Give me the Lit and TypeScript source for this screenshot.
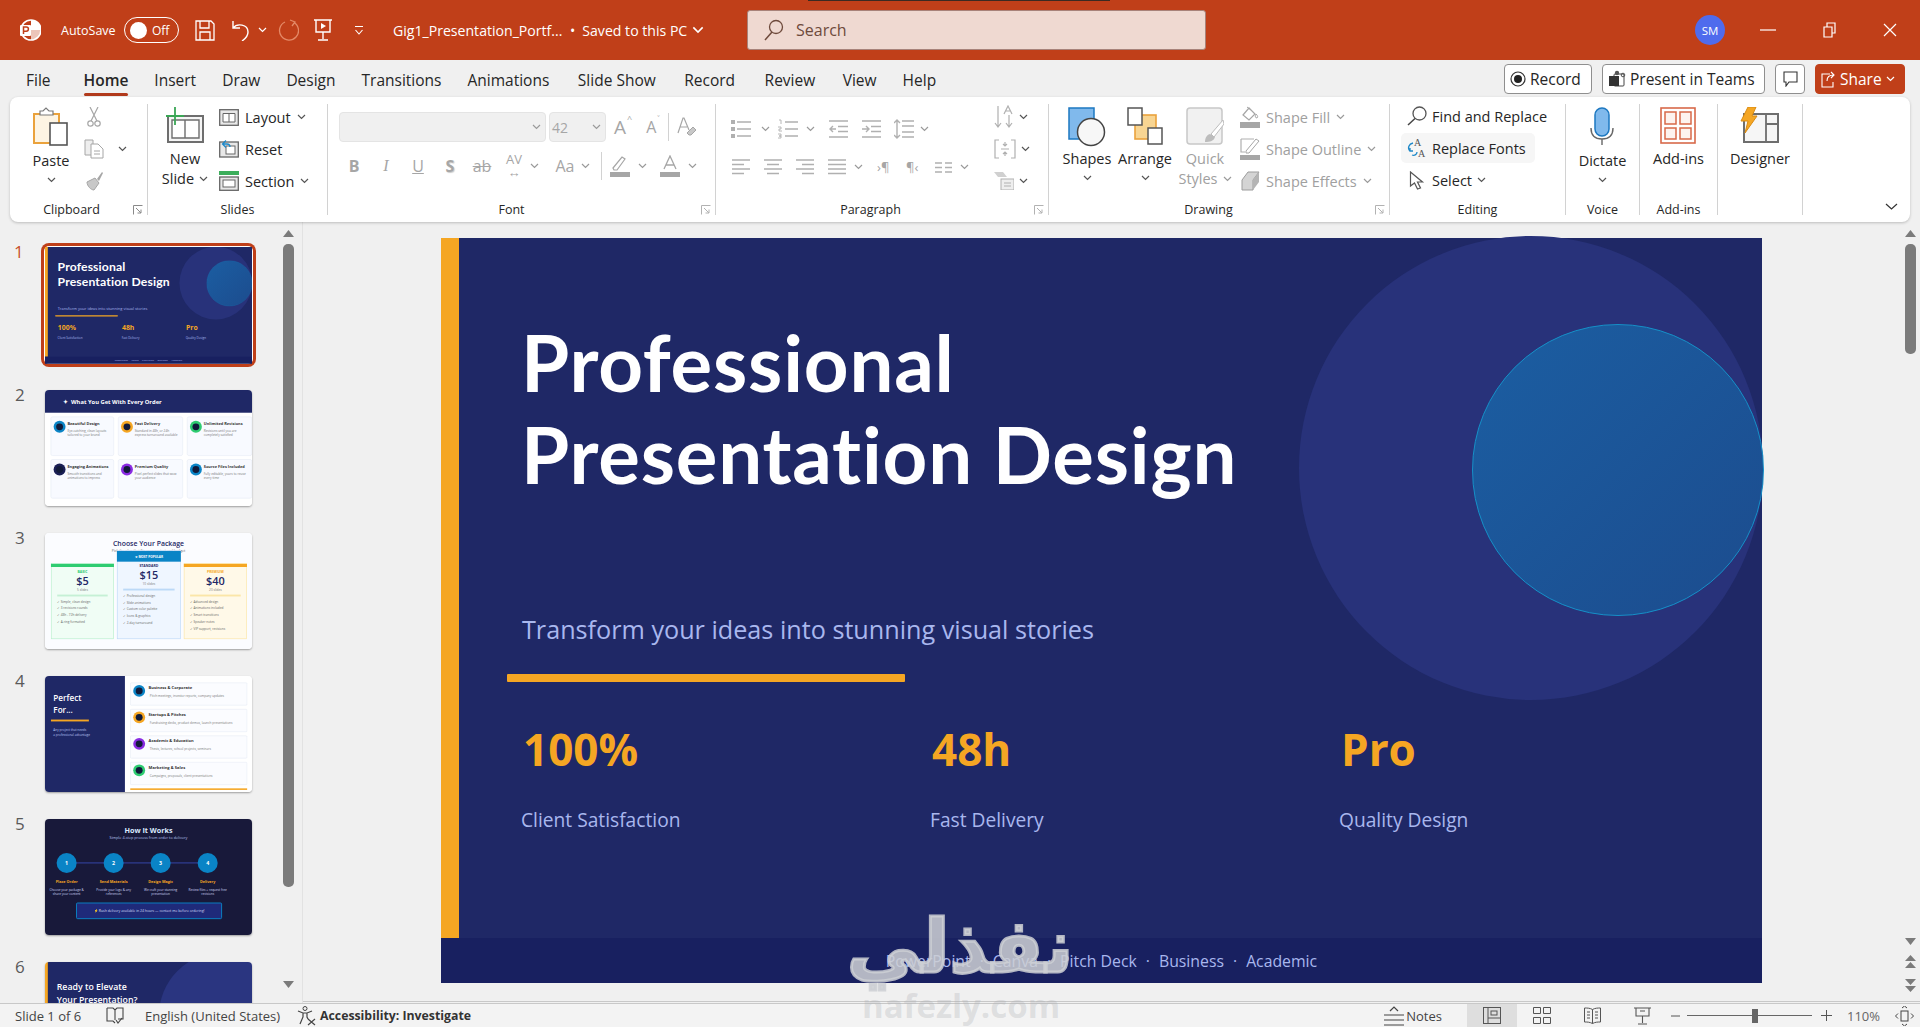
import { LitElement, html, css } from "lit";
import { customElement } from "lit/decorators.js";

const chev = html`<svg class="chev" width="9" height="6" viewBox="0 0 9 6"><path d="M1 1l3.5 3.5L8 1" fill="none" stroke="currentColor" stroke-width="1.2"/></svg>`;

const launcher = html`<svg class="launcher" width="10" height="10" viewBox="0 0 10 10"><path d="M.5 9.5v-9h9M3 3l5 5M8 4.5V8H4.5" fill="none" stroke="#8a8a8a"/></svg>`;

const ic = {
  logo: html`<svg width="22" height="22" viewBox="0 0 22 22"><circle cx="12" cy="11" r="10" fill="none" stroke="#fff" stroke-width="1.6"/><path d="M12 1a10 10 0 0 1 10 10H12z" fill="#fff"/><path d="M12 11h10a10 10 0 0 1-10 10z" fill="#fff" opacity=".7"/><rect x="1" y="6" width="11" height="11" rx="1" fill="#fff"/><path d="M4.5 15V8h2.8a2.1 2.1 0 0 1 0 4.2H4.5" fill="none" stroke="#c03f19" stroke-width="1.5"/></svg>`,
  save: html`<svg width="20" height="21" viewBox="0 0 20 21"><path d="M1 1h15l3 3v16H1zM5 1v7h9V1M5 20v-8h10v8" fill="none" stroke="#fff" stroke-width="1.3"/></svg>`,
  undo: html`<svg width="20" height="21" viewBox="0 0 20 21"><path d="M2 1v7h7M2 8c4-5 15-4 15 4 0 4-3 7-6 9" fill="none" stroke="#fff" stroke-width="1.4"/></svg>`,
  redo: html`<svg width="21" height="24" viewBox="0 0 21 24"><path d="M12 2l5 2-3 4M16 4.5a9.5 9.5 0 1 1-9-.5" fill="none" stroke="#e48a68" stroke-width="1.3"/></svg>`,
  present: html`<svg width="20" height="22" viewBox="0 0 20 22"><path d="M1 1h18M3 1v12h14V1M10 13v7M5 21h10" fill="none" stroke="#fff" stroke-width="1.4"/><path d="M8 4l5 3-5 3z" fill="#fff"/></svg>`,
  custom: html`<svg width="10" height="11" viewBox="0 0 10 11"><path d="M1 1.5h8M1.5 5L5 9l3.5-4" fill="none" stroke="#fff" stroke-width="1.1"/></svg>`,
  search: html`<svg width="22" height="22" viewBox="0 0 22 22"><circle cx="13" cy="8" r="6.5" fill="none" stroke="#6e4a3c" stroke-width="1.3"/><path d="M9 13l-7 8" stroke="#6e4a3c" stroke-width="1.5"/></svg>`,
  record: html`<svg width="16" height="16" viewBox="0 0 16 16"><circle cx="8" cy="8" r="7" fill="none" stroke="#333" stroke-width="1.2"/><circle cx="8" cy="8" r="4" fill="#222"/></svg>`,
  teams: html`<svg width="18" height="18" viewBox="0 0 18 18"><rect x="6" y="4" width="10" height="12" rx="1" fill="none" stroke="#444"/><rect x="1" y="6" width="10" height="10" fill="#333"/><circle cx="9" cy="3" r="2.2" fill="#555"/><circle cx="15" cy="5" r="1.8" fill="none" stroke="#555"/></svg>`,
  comment: html`<svg width="15" height="16" viewBox="0 0 15 16"><path d="M1 1h13v10H6l-3 4v-4H1z" fill="none" stroke="#333" stroke-width="1.1"/></svg>`,
  share: html`<svg width="15" height="17" viewBox="0 0 15 17"><path d="M9 3H1v13h11v-5M6 10c0-4 2-6 7-6M10 1l3 3-3 3" fill="none" stroke="#fff" stroke-width="1.1"/></svg>`,
  paste: html`<svg width="36" height="40" viewBox="0 0 36 40"><rect x="1" y="7" width="25" height="29" fill="#fdf4e3" stroke="#eaa23c" stroke-width="2"/><path d="M7 8V4h3l3-3 3 3h4v4z" fill="#fff" stroke="#7a7a7a" stroke-width="1.2"/><rect x="17" y="16" width="17" height="22" fill="#fff" stroke="#555" stroke-width="1.6"/></svg>`,
  cut: html`<svg width="14" height="20" viewBox="0 0 14 20"><path d="M3 0l7 14M11 0L4 14" stroke="#a6a6a6" stroke-width="1.2"/><circle cx="3.5" cy="16.5" r="2.7" fill="none" stroke="#a6a6a6" stroke-width="1.2"/><circle cx="10.5" cy="16.5" r="2.7" fill="none" stroke="#a6a6a6" stroke-width="1.2"/></svg>`,
  copy: html`<svg width="20" height="20" viewBox="0 0 20 20"><path d="M1 1h8v15H1z" fill="#eee" stroke="#a6a6a6"/><path d="M7 5h7l5 5v9H7z" fill="#fff" stroke="#a6a6a6"/><path d="M10 12h6M10 15h6" stroke="#a6a6a6"/></svg>`,
  brush: html`<svg width="20" height="20" viewBox="0 0 20 20"><path d="M13 8l5-7 1 1-4 8z" fill="#a6a6a6"/><path d="M3 11l8-4 4 5-5 7c-3 0-7-4-7-8z" fill="#c8c8c8" stroke="#a6a6a6"/></svg>`,
  newslide: html`<svg width="38" height="36" viewBox="0 0 38 36"><path d="M2 9h35v26H2z" fill="#f5f5f5" stroke="#6e6e6e" stroke-width="2"/><path d="M6 13h27v18H6zM19 13v18" fill="#fff" stroke="#6e6e6e" stroke-width="1.4"/><path d="M9 0v18M0 9h18" stroke="#3aa655" stroke-width="1.8"/></svg>`,
  layout: html`<svg width="20" height="17" viewBox="0 0 20 17"><rect x=".7" y=".7" width="18.6" height="15.6" fill="#e8e8e8" stroke="#666" stroke-width="1.3"/><path d="M4 4.5h12V13H4zM10 4.5V13" fill="#fff" stroke="#666"/></svg>`,
  reset: html`<svg width="20" height="18" viewBox="0 0 20 18"><rect x=".7" y="2" width="18.6" height="15" fill="#e8e8e8" stroke="#666" stroke-width="1.3"/><rect x="7" y="6" width="9" height="8" fill="#fff" stroke="#666"/><path d="M7 .5L3.5 4 7 7.5M4 4h4c2 0 3 1 3 3" fill="none" stroke="#1e88c8" stroke-width="1.3"/></svg>`,
  section: html`<svg width="20" height="20" viewBox="0 0 20 20"><rect x="0" y="0" width="20" height="4" fill="#3cae5b"/><rect x=".7" y="6" width="18.6" height="13.3" fill="#e8e8e8" stroke="#666" stroke-width="1.3"/><rect x="4" y="9" width="12" height="7" fill="#fff" stroke="#666"/></svg>`,
  clear: html`<svg width="20" height="22" viewBox="0 0 20 22"><path d="M1 17L6 2h1l5 12M3 11h7" fill="none" stroke="#a6a6a6" stroke-width="1.2"/><path d="M10 17l6-6 3 3-5 5h-2z" fill="#c8c8c8" stroke="#a6a6a6"/></svg>`,
  hl: html`<svg width="20" height="22" viewBox="0 0 20 22"><path d="M3 13L12 2l3 2-8 11H4z" fill="none" stroke="#a6a6a6" stroke-width="1.2"/><rect x="0" y="17" width="20" height="5" fill="#a6a6a6"/></svg>`,
  colorA: html`<svg width="20" height="22" viewBox="0 0 20 22"><path d="M4 14L10 1l6 13M6 10h8" fill="none" stroke="#a6a6a6" stroke-width="1.3"/><rect x="0" y="17" width="20" height="5" fill="#a6a6a6"/></svg>`,
  bullets: html`<svg width="20" height="18" viewBox="0 0 20 18"><path d="M6 2h14M6 9h14M6 16h14" stroke="#b0b0b0" stroke-width="1.6"/><path d="M0 0h4v4H0zM0 7h4v4H0zM0 14h4v4H0z" fill="#b0b0b0"/></svg>`,
  numbers: html`<svg width="20" height="20" viewBox="0 0 20 20"><path d="M7 3h13M7 10h13M7 17h13" stroke="#b0b0b0" stroke-width="1.6"/><path d="M1 1h2v4M0 8h3v2H1v2h3M0 15h3v2H1M1 17h2v2H0" fill="none" stroke="#b0b0b0" stroke-width=".9"/></svg>`,
  outdent: html`<svg width="19" height="18" viewBox="0 0 19 18"><path d="M0 1h19M9 6.5h10M9 11.5h10M0 17h19M7 9H1M4 6L1 9l3 3" fill="none" stroke="#b0b0b0" stroke-width="1.4"/></svg>`,
  indent: html`<svg width="19" height="18" viewBox="0 0 19 18"><path d="M0 1h19M9 6.5h10M9 11.5h10M0 17h19M0 9h6M4 6l3 3-3 3" fill="none" stroke="#b0b0b0" stroke-width="1.4"/></svg>`,
  lines: html`<svg width="20" height="20" viewBox="0 0 20 20"><path d="M8 2h12M8 7h12M8 13h12M8 18h12M3 1v18M0 4l3-3 3 3M0 16l3 3 3-3" fill="none" stroke="#b0b0b0" stroke-width="1.4"/></svg>`,
  textdir: html`<svg width="20" height="24" viewBox="0 0 20 24"><path d="M4 1v21M1 18l3 4 3-4M15 10v12M12 18l3 4 3-4M10 9l4-8 4 8M11 6h6" fill="none" stroke="#b0b0b0" stroke-width="1.2"/></svg>`,
  aligntext: html`<svg width="22" height="20" viewBox="0 0 22 20"><path d="M5 1H1v18h4M17 1h4v18h-4M7 10h8M11 3v4M9 5l2 2 2-2M11 17v-4M9 15l2-2 2 2" fill="none" stroke="#b0b0b0" stroke-width="1.2"/></svg>`,
  smart: html`<svg width="20" height="18" viewBox="0 0 20 18"><path d="M0 0h9l4 5H4z" fill="#d0d0d0"/><rect x="7" y="7" width="13" height="11" fill="#eee" stroke="#b0b0b0"/><path d="M10 11h7M10 14h7" stroke="#b0b0b0"/></svg>`,
  shapes: html`<svg width="38" height="40" viewBox="0 0 38 40"><rect x="1" y="1" width="25" height="31" fill="#80b9ec" stroke="#1d78c1" stroke-width="1.5"/><circle cx="23" cy="25" r="13.5" fill="#f7f7f7" stroke="#444" stroke-width="1.5"/></svg>`,
  arrange: html`<svg width="36" height="38" viewBox="0 0 36 38"><rect x="8" y="8" width="21" height="24" fill="#f8d592" stroke="#eaa23c" stroke-width="1.6"/><rect x="1" y="1" width="14" height="17" fill="#fff" stroke="#555" stroke-width="1.5"/><rect x="21" y="21" width="14" height="16" fill="#fff" stroke="#555" stroke-width="1.5"/></svg>`,
  quick: html`<svg width="38" height="38" viewBox="0 0 38 38"><rect x="1" y="1" width="35" height="36" rx="3" fill="#f1f1f1" stroke="#c8c8c8" stroke-width="1.5"/><path d="M37 13L25 27l3 3L38 17z" fill="#fff" stroke="#bcbcbc"/><path d="M24 27c-4 1-5 5-5 8 5 0 9-1 10-5z" fill="#bcbcbc"/></svg>`,
  fill: html`<svg width="20" height="22" viewBox="0 0 20 22"><path d="M3 9l6-7 6 6-6 6z" fill="#fff" stroke="#a6a6a6" stroke-width="1.2"/><path d="M7 1l4 3M16 8c2 2 2 3 1 4-2 0-2-2-1-4z" fill="none" stroke="#a6a6a6"/><rect x="0" y="16" width="20" height="6" fill="#a6a6a6"/></svg>`,
  outline: html`<svg width="20" height="22" viewBox="0 0 20 22"><path d="M1 1h13M1 1v13h4" fill="none" stroke="#b0b0b0" stroke-width="1.2"/><path d="M6 13L16 1l3 2L9 15H6z" fill="#fff" stroke="#a6a6a6"/><rect x="0" y="17" width="20" height="5" fill="#a6a6a6"/></svg>`,
  effects: html`<svg width="20" height="20" viewBox="0 0 20 20"><path d="M2 9l6-8h11L13 9v10H2z" fill="#d4d4d4" stroke="#9c9c9c"/><path d="M13 9l6-8v10l-6 8z" fill="#b4b4b4"/></svg>`,
  find: html`<svg width="20" height="20" viewBox="0 0 20 20"><circle cx="12.5" cy="7.5" r="6.5" fill="none" stroke="#555" stroke-width="1.3"/><path d="M8 12.5L1 19" stroke="#444" stroke-width="1.5"/></svg>`,
  selectIc: html`<svg width="15" height="19" viewBox="0 0 15 19"><path d="M1 1v14l4-3 3 6 3-1-3-6h5z" fill="#fff" stroke="#555" stroke-width="1.2"/></svg>`,
  mic: html`<svg width="24" height="38" viewBox="0 0 24 38"><rect x="5" y="1" width="14" height="28" rx="7" fill="#80b9ec" stroke="#1d78c1" stroke-width="1.5"/><path d="M1 21c0 7 4 11 11 11s11-4 11-11M12 32v6" fill="none" stroke="#666" stroke-width="1.4"/></svg>`,
  addins: html`<svg width="36" height="37" viewBox="0 0 36 37"><rect x="1" y="1" width="34" height="35" fill="#fff" stroke="#d8694a" stroke-width="1.6"/><path d="M5 5h11v12H5zM20 5h11v12H20zM5 21h11v11H5zM20 21h11v11H20z" fill="#fdf3ef" stroke="#d8694a" stroke-width="1.5"/></svg>`,
  designer: html`<svg width="39" height="36" viewBox="0 0 39 36"><rect x="4" y="7" width="34" height="28" fill="#f6f6f6" stroke="#6e6e6e" stroke-width="2"/><path d="M26 8v26M26 17h12" stroke="#6e6e6e" stroke-width="1.8"/><path d="M8 0h8l-4 9h5L5 26l3-12H1z" fill="#f5a623" stroke="#d88a12"/></svg>`,
  book: html`<svg width="18" height="17" viewBox="0 0 18 17"><path d="M1 1h6l2 2 2-2h6v11h-5M1 1v13h6l2 2M9 3v10" fill="none" stroke="#444" stroke-width="1.1"/><path d="M10 13l2 3 4-5" fill="none" stroke="#444" stroke-width="1.1"/></svg>`,
  access: html`<svg width="20" height="20" viewBox="0 0 20 20"><circle cx="8" cy="2.5" r="2" fill="none" stroke="#444"/><path d="M1 5l5 2h4l5-2M6 7v4l-3 7M10 7v4l1 2" fill="none" stroke="#444" stroke-width="1.2"/><path d="M11 13l7 6M18 13l-7 6" stroke="#444" stroke-width="1.2"/></svg>`,
  notes: html`<svg width="20" height="20" viewBox="0 0 20 20"><path d="M6 5l4-4 4 4M0 9h20M0 14h20M0 19h20" fill="none" stroke="#444" stroke-width="1.2"/></svg>`,
  normal: html`<svg width="18" height="17" viewBox="0 0 18 17"><rect x=".5" y=".5" width="17" height="16" fill="none" stroke="#555"/><path d="M5 1v15M5 11h12" stroke="#555"/><rect x="8" y="4" width="6" height="4" fill="none" stroke="#555"/></svg>`,
  sorter: html`<svg width="18" height="17" viewBox="0 0 18 17"><path d="M.5.5h7v6h-7zM10.5.5h7v6h-7zM.5 10.5h7v6h-7zM10.5 10.5h7v6h-7z" fill="none" stroke="#555"/></svg>`,
  reading: html`<svg width="17" height="17" viewBox="0 0 17 17"><path d="M8.5 2.5C6 1 3 1 .5 1v14c3 0 5 0 8 1.5 3-1.5 5-1.5 8-1.5V1c-2.5 0-5.5 0-8 1.5zm0 0v14M3 5h3M3 8h3M3 11h3M11 5h3M11 8h3M11 11h3" fill="none" stroke="#555"/></svg>`,
  show: html`<svg width="17" height="18" viewBox="0 0 17 18"><path d="M0 1h17M2 1v8h13V1M8.5 9v7M4 17h9M6 4h5" fill="none" stroke="#555" stroke-width="1.1"/></svg>`,
  fit: html`<svg width="19" height="20" viewBox="0 0 19 20"><rect x="6" y="5" width="7" height="10" fill="none" stroke="#444"/><path d="M7 2l2.5-2L12 2M7 18l2.5 2 2.5-2M3 7.5L.5 10 3 12.5M16 7.5l2.5 2.5-2.5 2.5" fill="none" stroke="#444"/></svg>`,
};

const tabs = ["File", "Home", "Insert", "Draw", "Design", "Transitions", "Animations", "Slide Show", "Record", "Review", "View", "Help"];

@customElement("app-root")
export class AppRoot extends LitElement {
  static styles = css`
    :host {
      display: block;
      position: relative;
      height: 1027px;
      overflow: hidden;
      background: #f0f0f0;
      font-family: "Open Sans", "Noto Sans", sans-serif;
      color: #262626;
    }
    * { box-sizing: border-box; }
    svg { display: block; flex: none; }

    /* title bar */
    .titlebar {
      height: 60px;
      background: #c03f19;
      color: #fff;
      display: flex;
      align-items: center;
      position: relative;
      padding-left: 19px;
    }
    .titlebar .chev, .share .chev { color: #fff; }
    .sliver { position: absolute; left: 808px; top: 0; width: 302px; height: 1px; background: #3b2a22; }
    .autosave { margin-left: 20px; font-size: 12.5px; width: 63px; }
    .toggle {
      width: 55px;
      height: 26px;
      border: 1.5px solid #fff;
      border-radius: 13px;
      display: flex;
      align-items: center;
      padding-left: 5px;
      gap: 5px;
      font-size: 12px;
    }
    .toggle i { width: 17px; height: 17px; border-radius: 50%; background: #fff; }
    .tb-save { margin-left: 16px; }
    .tb-undo { margin-left: 16px; }
    .tb-chev { margin-left: 7px; }
    .tb-redo { margin-left: 11px; }
    .tb-present { margin-left: 14px; }
    .tb-custom { margin-left: 21px; }
    .filename { margin-left: 29px; font-size: 14.1px; white-space: nowrap; width: 338px; display: flex; align-items: center; gap: 5px; }
    .filename svg { width: 12px; height: 8px; }
    .filename b { font-weight: 400; width: 172px; white-space: nowrap; }
    .filename u { text-decoration: none; margin-right: 2px; }
    .searchbox {
      margin-left: 16px;
      width: 459px;
      height: 40px;
      background: #efd9d1;
      border: 1px solid #a8837a;
      border-radius: 3px;
      display: flex;
      align-items: center;
      gap: 11px;
      padding-left: 15px;
      color: #6e4a3c;
      font-size: 16px;
    }
    .avatar {
      margin-left: 489px;
      width: 30px;
      height: 30px;
      border-radius: 50%;
      background: #4f6bed;
      font-size: 11.5px;
      display: flex;
      align-items: center;
      justify-content: center;
    }
    .winbtn { display: flex; margin-left: 35px; gap: 47px; align-items: center; }

    /* tab strip */
    .tabbar {
      height: 37px;
      display: flex;
      align-items: flex-start;
      padding: 4px 15px 0 26px;
    }
    .tab { font-size: 15.5px; margin-right: 26px; line-height: 32px; position: relative; height: 32px; white-space: nowrap; }
    .tab:first-child { margin-right: 33px; }
    .tab:nth-child(7), .tab:nth-child(8) { margin-right: 28.5px; }
    .tab:nth-child(9) { margin-right: 29.5px; }
    .tab:nth-child(10) { margin-right: 27.5px; }
    .tab.on { font-weight: 600; }
    .tab.on::after { content: ""; position: absolute; left: 0; right: 0; bottom: 0; height: 3px; background: #b23a1c; border-radius: 2px; }
    .tab-right { margin-left: auto; display: flex; gap: 10px; }
    .pill {
      height: 30px;
      border: 1px solid #8f8f8f;
      border-radius: 4px;
      background: #fff;
      display: flex;
      align-items: center;
      gap: 4px;
      padding: 0 5px;
      font-size: 15.5px;
    }
    .pill.rec { width: 88px; }
    .pill.teams { width: 163px; }
    .pill.cmt { width: 30px; justify-content: center; }
    .pill.share { width: 90px; background: #c03f19; border-color: #c03f19; color: #fff; margin-right: 0; }

    /* ribbon */
    .ribbon {
      height: 125px;
      margin: 0 10px;
      background: #fff;
      border-radius: 8px;
      box-shadow: 0 1px 3px rgba(0, 0, 0, .22);
      padding-top: 7px;
      display: flex;
      font-size: 14.5px;
      position: relative;
      white-space: nowrap;
    }
    .grp { height: 111px; border-right: 1px solid #d2d2d2; display: flex; flex-direction: column; }
    .g1 { width: 138px; }
    .g2 { width: 180px; }
    .g3 { width: 388px; }
    .g4 { width: 333px; }
    .g5 { width: 341px; }
    .g6 { width: 176px; }
    .g7 { width: 74px; }
    .g8 { width: 78px; }
    .g9 { width: 85px; }
    .body { flex: 1; display: flex; }
    .foot { height: 15px; display: flex; align-items: center; font-size: 12.5px; margin-bottom: -2px; }
    .foot span { flex: 1; text-align: center; }
    .launcher { margin-right: 4px; }
    .shift-f { padding-right: 6px; }
    .shift-p { padding-right: 9px; }
    .shift-d { padding-right: 7px; }
    .g3 .launcher, .g4 .launcher, .g5 .launcher { opacity: .65; }
    .big { display: flex; flex-direction: column; align-items: center; line-height: 20px; }
    .big .pic { height: 45px; padding-top: 3px; }
    .big .pic.low { height: 47px; }
    .big .line { display: flex; align-items: center; gap: 5px; }
    .big .dn { height: 18px; display: flex; align-items: center; }
    .rows { display: grid; grid-auto-rows: 32px; margin-top: -3px; }
    .row { display: flex; align-items: center; gap: 6px; }
    .dim { color: #a0a0a0; }
    .chev { color: #555; }
    .dim .chev, .cellrow .chev { color: #9a9a9a; }

    .paste { width: 50px; margin-left: 16px; }
    .clipsmall { margin-left: 8px; }
    .clipsmall .pad { width: 20px; display: flex; justify-content: center; }
    .clipsmall .row { gap: 14px; }
    .newslide { width: 60px; margin-left: 7px; }
    .slidesm { margin-left: 4px; }
    .slidesm .row svg:first-child { width: 20px; }

    /* font / paragraph button rows */
    .stack { display: flex; flex-direction: column; }
    .cellrow { display: flex; align-items: center; height: 30px; color: #a6a6a6; }
    .cell { width: 32px; display: flex; justify-content: center; font-size: 16px; }
    .cell.b { font-weight: 700; }
    .cell.i { font-style: italic; font-family: "Liberation Serif", serif; }
    .cell.u { text-decoration: underline; }
    .cell.sh { font-weight: 700; text-shadow: 1px 1px 1px #ccc; }
    .cell.st { text-decoration: line-through; }
    .cell.av { font-size: 13px; line-height: 13px; text-align: center; }
    .vsep { width: 1px; height: 28px; background: #d2d2d2; }
    .combo { height: 30px; background: #f0f0f0; border: 1px solid #e4e4e4; border-radius: 4px; display: flex; align-items: center; justify-content: flex-end; padding-right: 4px; color: #a6a6a6; font-size: 14px; }
    .combo.name { width: 207px; margin-left: 11px; }
    .combo.size { width: 57px; margin-left: 3px; justify-content: space-between; padding-left: 2px; }
    .bigA { font-size: 19px; line-height: 20px; color: #a6a6a6; }
    .smA { font-size: 16px; line-height: 20px; color: #a6a6a6; }
    .sup { font-size: 9px; align-self: flex-start; margin-left: 1px; }
    .r1 { margin-top: 8px; }
    .r2 { margin-top: 9px; padding-left: 10px; }
    .m6 { margin-left: 6px; }
    .m8 { margin-left: 8px; }
    .m10 { margin-left: 10px; }
    .m11 { margin-left: 11px; }
    .m13 { margin-left: 13px; }
    .m14 { margin-left: 14px; }
    .p1 { margin-top: 10px; padding-left: 15px; }
    .p2 { margin-top: 8px; padding-left: 16px; }
    .pbars { width: 18px; }
    .pl { font-size: 13px; width: 15px; }
    .para-main { width: 278px; }
    .para-side { width: 40px; }
    .para-side .row { height: 32px; gap: 5px; color: #9a9a9a; }
    .para-side .rows { grid-auto-rows: 33px; }

    .shapes-b { width: 56px; margin-left: 10px; }
    .arr-b { width: 60px; margin-left: 0; }
    .qs-b { width: 62px; margin-left: -1px; }
    .draw-list { margin-left: 4px; }
    .editing { padding-left: 17px; }
    .editing .row { gap: 5px; width: 134px; height: 30px; margin-bottom: 2px; padding-left: 0; }
    .editing .row svg:first-child { width: 20px; }
    .editing .row.hlt { background: #f6f6f6; border-radius: 5px; margin-left: -6px; padding-left: 6px; }
    .center { justify-content: center; }
    .big .pic.mic { height: 47px; }
    .collapse { position: absolute; right: 12px; top: 106px; }

    /* main */
    .main { height: 781px; display: flex; }
    .pane { width: 303px; display: flex; border-right: 1px solid #e2e2e2; height: 781px; overflow: hidden; }
    .list { width: 283px; padding-top: 25px; display: flex; flex-direction: column; gap: 27px; }
    .tr { display: flex; }
    .num { width: 45px; padding-left: 14px; font-size: 17px; line-height: 20px; color: #5a5a5a; margin-top: -5px; height: 20px; }
    .tr.sel .num { color: #c8502e; }
    .tr:not(:first-child) .num { margin-top: -5px; padding-left: 15px; }
    .thumb {
      width: 207px;
      height: 116px;
      flex: none;
      border-radius: 4px;
      overflow: hidden;
      background: #fff;
      box-shadow: 0 1px 2px rgba(0, 0, 0, .35);
    }
    .tr.sel .thumb { box-shadow: 0 0 0 1px #fff, 0 0 0 4px #bf3f19; overflow: visible; }
    .tcanvas { width: 1321px; height: 745px; transform: scale(.1567); transform-origin: 0 0; overflow: hidden; }
    .sbar { width: 11px; display: flex; flex-direction: column; align-items: center; }
    .sb-up { margin-top: 8px; }
    .sb-thumb { width: 11px; border-radius: 5px; background: #7b7b7b; margin-top: 7px; }
    .left-t { height: 643px; }
    .sb-gap { flex: 1; }
    .left-dn { margin-bottom: 15px; }
    .stage {
      flex: 1;
      height: 780px;
      border-bottom: 1px solid #c8c8c8;
      display: flex;
    }
    .stage-in { flex: 1; padding: 16px 0 0 138px; min-width: 0; }
    .rbar { width: 16px; margin-right: 0; display: flex; flex-direction: column; align-items: center; padding-right: 4px; }
    .right-t { height: 110px; }
    .dbl { margin-top: 10px; }

    /* slide 1 */
    .slide {
      width: 1321px;
      height: 745px;
      background: #1f2866;
      position: relative;
      display: flex;
      flex-direction: column;
      color: #fff;
      font-family: "Open Sans", "Noto Sans", sans-serif;
    }
    .s1-up { flex: 1; display: flex; min-height: 0; }
    .accent { width: 18px; background: #f5a623; }
    .s1-content { flex: 1; padding: 78px 0 0 62px; position: relative; }
    .s1-title { font-family: Lato, "Open Sans", sans-serif; font-size: 78px; font-weight: 700; line-height: 92px; letter-spacing: 0.8px; margin: 0; }
    .s1-sub { font-size: 25.2px; line-height: 34px; color: #a9b7ee; margin: 112px 0 0 1px; }
    .s1-bar { width: 398px; height: 8px; background: #f5a623; margin: 28px 0 0 -14px; border-radius: 1px; }
    .s1-stats { display: grid; grid-template-columns: 409px 409px 300px; margin: 37px 0 0 0; }
    .s1-val { font-size: 44px; line-height: 60px; font-weight: 700; color: #f5a623; padding-left: 2px; }
    .s1-lab { font-size: 19.2px; line-height: 26px; color: #a9b7ee; margin-top: 28px; }
    .s1-foot {
      height: 45px;
      background: #182060;
      color: #a9b7ee;
      font-size: 15.8px;
      display: flex;
      align-items: center;
      justify-content: center;
      gap: 9px;
      position: relative;
    }
    .ring1 { position: absolute; left: 858px; top: -2px; width: 464px; height: 464px; border-radius: 50%; background: #28327a; }
    .ring2 { position: absolute; left: 1031px; top: 86px; width: 292px; height: 292px; border-radius: 50%; background: linear-gradient(135deg, #1b5ea2, #1c4c8e); border: 1.5px solid #1590c8; }

    /* thumbnails */
    .t2 { background: #fff; height: 745px; color: #222; }
    .t2-head { height: 145px; background: #1f2866; color: #fff; font-size: 37px; font-weight: 700; display: flex; align-items: center; padding-left: 115px; gap: 20px; }
    .t2-grid { display: grid; grid-template-columns: 404px 414px 415px; grid-auto-rows: 250px; gap: 22px 26px; padding: 25px 0 0 36px; }
    .card { background: #f8faff; border: 3px solid #e2e7f2; border-radius: 12px; padding: 24px 16px; position: relative; }
    .card-h { display: flex; gap: 12px; font-weight: 700; font-size: 25px; color: #333; align-items: flex-start; line-height: 34px; white-space: nowrap; }
    .dot { width: 76px; height: 76px; border-radius: 50%; flex: none; display: flex; align-items: center; justify-content: center; }
    .dot i { width: 44px; height: 44px; border-radius: 50%; background: #111a3a; }
    .card p { margin: -26px 0 0 88px; font-size: 20px; line-height: 28px; color: #777; }
    .c-blue { background: #0a84c6; }
    .c-org { background: #f5a623; }
    .c-grn { background: #2ecc71; }
    .c-nvy { background: #1a1f55; }
    .c-pur { background: #8a2be2; }

    .t3 { background: #fbfcff; height: 745px; color: #1f2866; text-align: center; position: relative; }
    .t3-title { font-size: 44px; font-weight: 600; line-height: 60px; padding-top: 38px; }
    .t3-sub { font-size: 22px; color: #666; line-height: 28px; }
    .t3-cols { display: grid; grid-template-columns: 402px 408px 403px; gap: 20px 19px; padding-left: 38px; margin-top: -15px; align-items: end; }
    .plan { border: 4px solid; height: 484px; padding-top: 14px; position: relative; }
    .plan.mid { height: 566px; }
    .plan .top { height: 20px; margin: -14px -4px 14px; }
    .plan .badge { height: 68px; background: #0a84c6; color: #fff; font-size: 20px; font-weight: 700; margin: -14px -4px 10px; display: flex; align-items: center; justify-content: center; }
    .plan .nm { font-size: 22px; font-weight: 700; line-height: 30px; }
    .plan .pr { font-size: 70px; line-height: 90px; font-weight: 600; }
    .plan .du { font-size: 20px; color: #777; line-height: 28px; }
    .plan .ln { height: 12px; margin: 14px 36px 10px; }
    .plan ul { list-style: none; margin: 0; padding: 0 0 0 36px; text-align: left; font-size: 20px; line-height: 44px; color: #666; }
    .p-g { background: #f0fdf5; border-color: #b8efcd; }
    .p-b { background: #eff6ff; border-color: #bcd9f7; }
    .p-o { background: #fff9e8; border-color: #fbe6a8; }

    .t4 { display: flex; height: 745px; background: #fff; }
    .t4-l { width: 510px; background: #1f2866; color: #fff; padding: 100px 0 0 53px; }
    .t4-l h3 { margin: 0; font-size: 52px; line-height: 78px; font-weight: 600; }
    .t4-l .br { width: 242px; height: 12px; background: #f5a623; margin: 22px 0 0 -15px; }
    .t4-l p { margin: 44px 0 0; font-size: 20px; line-height: 26px; color: #b9c4f0; }
    .t4-r { flex: 1; padding: 42px 31px 0 34px; display: flex; flex-direction: column; gap: 23px; }
    .t4-c { height: 146px; border: 3px solid #e2e7f2; background: #fbfcff; border-radius: 6px; display: flex; padding: 12px 16px; gap: 22px; }
    .t4-c b { display: block; font-size: 26px; line-height: 34px; color: #333; }
    .t4-c span { display: block; font-size: 20px; line-height: 30px; color: #777; margin-top: 24px; padding-left: 8px; }
    .t4-line { height: 10px; background: #f5a623; margin-top: -1px; }

    .t5 { background: #18193a; height: 745px; color: #fff; text-align: center; position: relative; }
    .t5-t { font-size: 46px; font-weight: 700; line-height: 60px; padding-top: 42px; color: #dcecff; }
    .t5-s { font-size: 24px; line-height: 30px; color: #b9c4f0; margin-top: 0; }
    .t5-steps { display: grid; grid-template-columns: repeat(4, 300px); margin: 85px 0 0 -12px; position: relative; }
    .t5-step { display: flex; flex-direction: column; align-items: center; position: relative; }
    .t5-step:not(:last-child)::after { content: ""; position: absolute; left: 150px; top: 58px; width: 300px; height: 10px; background: #2a3580; }
    .t5-n { width: 128px; height: 128px; border-radius: 50%; background: #0a84c6; font-size: 34px; font-weight: 700; display: flex; align-items: center; justify-content: center; z-index: 1; }
    .t5-l { color: #f5a623; font-size: 24px; font-weight: 700; line-height: 30px; margin-top: 40px; }
    .t5-d { font-size: 20px; line-height: 24px; color: #cfd6f2; margin-top: 26px; width: 250px; }
    .t5-note { margin: 44px 0 0 198px; width: 932px; height: 106px; background: #1f2a7a; border: 6px solid #0a84c6; border-radius: 10px; font-size: 22px; display: flex; align-items: center; justify-content: center; color: #d8def8; }

    .t6 { height: 745px; background: #1f2866; display: flex; position: relative; color: #fff; overflow: hidden; }
    .t6 .ring { position: absolute; left: 728px; top: -60px; width: 800px; height: 800px; border-radius: 50%; background: #2a3580; }
    .t6-txt { padding: 112px 0 0 57px; font-size: 56px; line-height: 84px; font-weight: 600; position: relative; }

    /* status bar */
    .status {
      height: 24px;
      border-top: 1px solid #c8c8c8;
      background: #f3f3f3;
      display: flex;
      align-items: center;
      font-size: 13px;
      padding-left: 15px;
      white-space: nowrap;
      color: #444;
    }
    .st-count { width: 91px; }
    .st-lang { margin-left: 21px; width: 152px; }
    .st-acc { margin-right: 3px; }
    .status b { font-weight: 700; color: #333; font-size: 12.3px; }
    .st-right { margin-left: auto; display: flex; align-items: center; }
    .st-notes { display: flex; align-items: center; gap: 2px; margin-right: 25px; }
    .view { width: 50px; height: 23px; display: flex; justify-content: center; align-items: center; }
    .view.on { background: #dedede; }
    .zoomer { display: flex; align-items: center; margin-left: 4px; }
    .track { width: 125px; height: 1px; background: #666; margin: 0 9px 0 7px; display: flex; align-items: center; padding-left: 65px; }
    .track i { width: 6px; height: 14px; background: #666; }
    .pct { margin-left: 15px; width: 48px; color: #666; }
    .st-fit { margin-right: 6px; }

    /* watermark */
    .wm { position: absolute; left: 840px; top: 901px; width: 240px; text-align: center; color: rgba(205, 207, 212, .86); font: 700 74px/90px "DejaVu Sans", sans-serif; -webkit-text-stroke: 3px rgba(205, 207, 212, .86); pointer-events: none; }
    .wm2 { position: absolute; left: 862px; top: 986px; color: rgba(170, 172, 176, .3); font: 700 33px/40px "Open Sans", sans-serif; pointer-events: none; }
  `;

  slide1() {
    return html`
      <div class="slide">
        <div class="ring1"></div>
        <div class="ring2"></div>
        <div class="s1-up">
          <div class="accent"></div>
          <div class="s1-content">
            <h1 class="s1-title">Professional<br />Presentation Design</h1>
            <div class="s1-sub">Transform your ideas into stunning visual stories</div>
            <div class="s1-bar"></div>
            <div class="s1-stats">
              <div><div class="s1-val">100%</div><div class="s1-lab">Client Satisfaction</div></div>
              <div><div class="s1-val">48h</div><div class="s1-lab">Fast Delivery</div></div>
              <div><div class="s1-val">Pro</div><div class="s1-lab">Quality Design</div></div>
            </div>
          </div>
        </div>
        <div class="s1-foot">
          <span>PowerPoint</span><span>·</span><span>Canva</span><span>·</span><span>Pitch Deck</span><span>·</span><span>Business</span><span>·</span><span>Academic</span>
        </div>
      </div>
    `;
  }

  slide2() {
    const cards = [
      ["c-blue", "Beautiful Design", "Eye-catching, clean layouts tailored to your brand"],
      ["c-org", "Fast Delivery", "Standard in 48h, or 24h express turnaround available"],
      ["c-grn", "Unlimited Revisions", "Revisions until you are completely satisfied"],
      ["c-nvy", "Engaging Animations", "Smooth transitions and animations to impress"],
      ["c-pur", "Premium Quality", "Pixel-perfect slides that wow your audience"],
      ["c-blue", "Source Files Included", "Fully editable, yours to reuse every time"],
    ];
    return html`
      <div class="t2">
        <div class="t2-head"><span>✦</span><span>What You Get With Every Order</span></div>
        <div class="t2-grid">
          ${cards.map(
            (c) => html`<div class="card">
              <div class="card-h"><div class="dot ${c[0]}"><i></i></div><span>${c[1]}</span></div>
              <p>${c[2]}</p>
            </div>`
          )}
        </div>
      </div>
    `;
  }

  slide3() {
    const plan = (cls: string, top: string, nm: string, pr: string, du: string, ln: string, items: string[]) => html`
      <div class="plan ${cls}">
        <div class="top" style="background:${top}"></div>
        <div class="nm" style="color:${top}">${nm}</div>
        <div class="pr">${pr}</div>
        <div class="du">${du}</div>
        <div class="ln" style="background:${ln}"></div>
        <ul>${items.map((i) => html`<li>✓ ${i}</li>`)}</ul>
      </div>`;
    return html`
      <div class="t3">
        <div class="t3-title">Choose Your Package</div>
        <div class="t3-sub">Pick the plan that fits your project and budget</div>
        <div class="t3-cols">
          ${plan("p-g", "#2ecc71", "BASIC", "$5", "5 slides", "#c5f0d5", ["Simple, clean design", "3 revisions rounds", "48h - 72h delivery", "A-ring formatted"])}
          <div class="plan mid p-b">
            <div class="badge">★ MOST POPULAR</div>
            <div class="nm">STANDARD</div>
            <div class="pr">$15</div>
            <div class="du">10 slides</div>
            <div class="ln" style="background:#bcd9f7"></div>
            <ul>
              <li>✓ Professional design</li><li>✓ Slide animations</li><li>✓ Custom color palette</li>
              <li>✓ Icons &amp; graphics</li><li>✓ 2-day turnaround</li>
            </ul>
          </div>
          ${plan("p-o", "#f5a623", "PREMIUM", "$40", "20 slides", "#fbe6a8", ["Advanced design", "Animations included", "Smart transitions", "Speaker notes", "VIP support, revisions"])}
        </div>
      </div>
    `;
  }

  slide4() {
    const rows = [
      ["c-blue", "Business & Corporate", "Pitch meetings, investor reports, company updates"],
      ["c-org", "Startups & Pitches", "Fundraising decks, product demos, launch presentations"],
      ["c-pur", "Academic & Education", "Thesis, lectures, school projects, seminars"],
      ["c-grn", "Marketing & Sales", "Campaigns, proposals, client presentations"],
    ];
    return html`
      <div class="t4">
        <div class="t4-l">
          <h3>Perfect<br />For...</h3>
          <div class="br"></div>
          <p>Any project that needs<br />a professional advantage</p>
        </div>
        <div class="t4-r">
          ${rows.map(
            (r) => html`<div class="t4-c">
              <div class="dot ${r[0]}"><i></i></div>
              <div><b>${r[1]}</b><span>${r[2]}</span></div>
            </div>`
          )}
          <div class="t4-line"></div>
        </div>
      </div>
    `;
  }

  slide5() {
    const steps = [
      ["1", "Place Order", "Choose your package & share your content"],
      ["2", "Send Materials", "Provide your logo & any references"],
      ["3", "Design Magic", "We craft your stunning presentation"],
      ["4", "Delivery", "Review files + request free revisions"],
    ];
    return html`
      <div class="t5">
        <div class="t5-t">How It Works</div>
        <div class="t5-s">Simple 4-step process from order to delivery</div>
        <div class="t5-steps">
          ${steps.map(
            (s) => html`<div class="t5-step">
              <div class="t5-n">${s[0]}</div>
              <div class="t5-l">${s[1]}</div>
              <div class="t5-d">${s[2]}</div>
            </div>`
          )}
        </div>
        <div class="t5-note">⚡ Rush delivery available in 24 hours — contact me before ordering!</div>
      </div>
    `;
  }

  slide6() {
    return html`
      <div class="t6">
        <div class="ring"></div>
        <div class="accent"></div>
        <div class="t6-txt">Ready to Elevate<br />Your Presentation?</div>
      </div>
    `;
  }

  renderThumbs() {
    const slides = [this.slide1(), this.slide2(), this.slide3(), this.slide4(), this.slide5(), this.slide6()];
    return slides.map(
      (s, i) => html`<div class="tr ${i === 0 ? "sel" : ""}">
        <div class="num">${i + 1}</div>
        <div class="thumb"><div class="tcanvas">${s}</div></div>
      </div>`
    );
  }

  render() {
    const up = html`<svg width="11" height="7" viewBox="0 0 11 7"><path d="M5.5 0L11 7H0z" fill="#7b7b7b"/></svg>`;
    const dn = html`<svg width="11" height="7" viewBox="0 0 11 7"><path d="M5.5 7L11 0H0z" fill="#7b7b7b"/></svg>`;
    const dup = html`<svg width="11" height="14" viewBox="0 0 11 14"><path d="M5.5 0L11 6H0zM5.5 7L11 13H0z" fill="#7b7b7b"/></svg>`;
    const ddn = html`<svg width="11" height="14" viewBox="0 0 11 14"><path d="M5.5 6L11 0H0zM5.5 13L11 7H0z" fill="#7b7b7b"/></svg>`;
    return html`
      <div class="titlebar">
        <div class="sliver"></div>
        ${ic.logo}
        <div class="autosave">AutoSave</div>
        <div class="toggle"><i></i>Off</div>
        <div class="tb-save">${ic.save}</div>
        <div class="tb-undo">${ic.undo}</div>
        <div class="tb-chev">${chev}</div>
        <div class="tb-redo">${ic.redo}</div>
        <div class="tb-present">${ic.present}</div>
        <div class="tb-custom">${ic.custom}</div>
        <div class="filename"><b>Gig1_Presentation_Portf...</b><u>•</u>Saved to this PC ${chev}</div>
        <div class="searchbox">${ic.search}<span>Search</span></div>
        <div class="avatar">SM</div>
        <div class="winbtn">
          <svg width="16" height="2" viewBox="0 0 16 2"><path d="M0 1h16" stroke="#fff" stroke-width="1.2"/></svg>
          <svg width="13" height="16" viewBox="0 0 13 16"><path d="M1 5h8v10H1zM4 5V1h8v10H9" fill="none" stroke="#fff" stroke-width="1.2"/></svg>
          <svg width="14" height="14" viewBox="0 0 14 14"><path d="M1 1l12 12M13 1L1 13" stroke="#fff" stroke-width="1.2"/></svg>
        </div>
      </div>

      <div class="tabbar">
        ${tabs.map((t) => html`<div class="tab ${t === "Home" ? "on" : ""}">${t}</div>`)}
        <div class="tab-right">
          <div class="pill rec">${ic.record}Record</div>
          <div class="pill teams">${ic.teams}Present in Teams</div>
          <div class="pill cmt">${ic.comment}</div>
          <div class="pill share">${ic.share}Share ${chev}</div>
        </div>
      </div>

      <div class="ribbon">
        <div class="grp g1">
          <div class="body">
            <div class="big paste">
              <div class="pic low">${ic.paste}</div>
              <div>Paste</div>
              <div class="dn">${chev}</div>
            </div>
            <div class="rows clipsmall">
              <div class="row"><div class="pad">${ic.cut}</div></div>
              <div class="row"><div class="pad">${ic.copy}</div>${chev}</div>
              <div class="row"><div class="pad">${ic.brush}</div></div>
            </div>
          </div>
          <div class="foot"><span>Clipboard</span>${launcher}</div>
        </div>

        <div class="grp g2">
          <div class="body">
            <div class="big newslide">
              <div class="pic">${ic.newslide}</div>
              <div>New</div>
              <div class="line">Slide ${chev}</div>
            </div>
            <div class="rows slidesm">
              <div class="row">${ic.layout}Layout ${chev}</div>
              <div class="row">${ic.reset}Reset</div>
              <div class="row">${ic.section}Section ${chev}</div>
            </div>
          </div>
          <div class="foot"><span>Slides</span></div>
        </div>

        <div class="grp g3">
          <div class="body stack">
            <div class="cellrow r1">
              <div class="combo name">${chev}</div>
              <div class="combo size"><span>42</span>${chev}</div>
              <div class="bigA m8">A</div><span class="sup">^</span>
              <div class="smA m14">A</div><span class="sup">˅</span>
              <div class="vsep m8"></div>
              <div class="m8">${ic.clear}</div>
            </div>
            <div class="cellrow r2">
              <div class="cell b">B</div>
              <div class="cell i">I</div>
              <div class="cell u">U</div>
              <div class="cell sh">S</div>
              <div class="cell st">ab</div>
              <div class="cell av">AV<br />↔</div>
              ${chev}
              <div class="cell m10">Aa</div>
              ${chev}
              <div class="vsep m11"></div>
              <div class="m8">${ic.hl}</div>
              <div class="m8">${chev}</div>
              <div class="m13">${ic.colorA}</div>
              <div class="m8">${chev}</div>
            </div>
          </div>
          <div class="foot"><span class="shift-f">Font</span>${launcher}</div>
        </div>

        <div class="grp g4">
          <div class="body">
            <div class="stack para-main">
              <div class="cellrow p1">
                ${ic.bullets}<div class="m10">${chev}</div>
                <div class="m8">${ic.numbers}</div><div class="m8">${chev}</div>
                <div class="m14">${ic.outdent}</div>
                <div class="m14">${ic.indent}</div>
                <div class="m13">${ic.lines}</div><div class="m6">${chev}</div>
              </div>
              <div class="cellrow p2">
                <svg class="pbars" width="18" height="16" viewBox="0 0 18 16"><path d="M0 1h18M0 5.5h12M0 10h18M0 14.5h12" stroke="#b0b0b0" stroke-width="1.5"/></svg>
                <svg class="pbars m14" width="18" height="16" viewBox="0 0 18 16"><path d="M0 1h18M3 5.5h12M0 10h18M3 14.5h12" stroke="#b0b0b0" stroke-width="1.5"/></svg>
                <svg class="pbars m14" width="18" height="16" viewBox="0 0 18 16"><path d="M0 1h18M6 5.5h12M0 10h18M6 14.5h12" stroke="#b0b0b0" stroke-width="1.5"/></svg>
                <svg class="pbars m14" width="18" height="16" viewBox="0 0 18 16"><path d="M0 1h18M0 5.5h18M0 10h18M0 14.5h18" stroke="#b0b0b0" stroke-width="1.5"/></svg>
                <div class="m8">${chev}</div>
                <div class="pl m14">›¶</div>
                <div class="pl m14">¶‹</div>
                <svg class="m14" width="17" height="11" viewBox="0 0 17 11"><path d="M0 1h7M10 1h7M0 5.5h7M10 5.5h7M0 10h7M10 10h7" stroke="#b0b0b0" stroke-width="1.3"/></svg>
                <div class="m8">${chev}</div>
              </div>
            </div>
            <div class="rows para-side">
              <div class="row">${ic.textdir}${chev}</div>
              <div class="row">${ic.aligntext}${chev}</div>
              <div class="row">${ic.smart}${chev}</div>
            </div>
          </div>
          <div class="foot"><span class="shift-p">Paragraph</span>${launcher}</div>
        </div>

        <div class="grp g5">
          <div class="body">
            <div class="big shapes-b"><div class="pic">${ic.shapes}</div><div>Shapes</div><div class="dn">${chev}</div></div>
            <div class="big arr-b"><div class="pic">${ic.arrange}</div><div>Arrange</div><div class="dn">${chev}</div></div>
            <div class="big qs-b dim"><div class="pic">${ic.quick}</div><div>Quick</div><div class="line">Styles ${chev}</div></div>
            <div class="rows draw-list dim">
              <div class="row">${ic.fill}Shape Fill ${chev}</div>
              <div class="row">${ic.outline}Shape Outline ${chev}</div>
              <div class="row">${ic.effects}Shape Effects ${chev}</div>
            </div>
          </div>
          <div class="foot"><span class="shift-d">Drawing</span>${launcher}</div>
        </div>

        <div class="grp g6">
          <div class="body editing">
            <div class="rows">
              <div class="row">${ic.find}Find and Replace</div>
              <div class="row hlt">
                <svg width="20" height="20" viewBox="0 0 20 20"><text x="7" y="8" font-size="10" fill="#555" font-family="Liberation Serif">A</text><text x="11" y="19" font-size="10" fill="#555" font-family="Liberation Serif">A</text><path d="M6 5C2 6 0 10 3 13M3 10v3h3M5 17c3 1 5-1 5-3" fill="none" stroke="#1e88c8" stroke-width="1.3"/></svg>
                Replace Fonts
              </div>
              <div class="row">${ic.selectIc}Select ${chev}</div>
            </div>
          </div>
          <div class="foot"><span>Editing</span></div>
        </div>

        <div class="grp g7">
          <div class="body center">
            <div class="big"><div class="pic mic">${ic.mic}</div><div>Dictate</div><div class="dn">${chev}</div></div>
          </div>
          <div class="foot"><span>Voice</span></div>
        </div>

        <div class="grp g8">
          <div class="body center">
            <div class="big"><div class="pic">${ic.addins}</div><div>Add-ins</div></div>
          </div>
          <div class="foot"><span>Add-ins</span></div>
        </div>

        <div class="grp g9">
          <div class="body center">
            <div class="big"><div class="pic">${ic.designer}</div><div>Designer</div></div>
          </div>
          <div class="foot"></div>
        </div>
        <svg class="collapse" width="13" height="7" viewBox="0 0 13 7"><path d="M1 1l5.5 5L12 1" fill="none" stroke="#333" stroke-width="1.2"/></svg>
      </div>

      <div class="main">
        <div class="pane">
          <div class="list">${this.renderThumbs()}</div>
          <div class="sbar">
            <div class="sb-up">${up}</div>
            <div class="sb-thumb left-t"></div>
            <div class="sb-gap"></div>
            <div class="left-dn">${dn}</div>
          </div>
        </div>
        <div class="stage">
          <div class="stage-in">${this.slide1()}</div>
          <div class="rbar">
            <div class="sb-up">${up}</div>
            <div class="sb-thumb right-t"></div>
            <div class="sb-gap"></div>
            ${dn}
            <div class="dbl">${dup}</div>
            <div class="dbl">${ddn}</div>
            <div class="sb-up"></div>
          </div>
        </div>
      </div>

      <div class="status">
        <div class="st-count">Slide 1 of 6</div>
        ${ic.book}
        <div class="st-lang">English (United States)</div>
        <div class="st-acc">${ic.access}</div>
        <b>Accessibility: Investigate</b>
        <div class="st-right">
          <div class="st-notes">${ic.notes}Notes</div>
          <div class="view on">${ic.normal}</div>
          <div class="view">${ic.sorter}</div>
          <div class="view">${ic.reading}</div>
          <div class="view">${ic.show}</div>
          <div class="zoomer">
            <svg width="9" height="2" viewBox="0 0 9 2"><path d="M0 1h9" stroke="#555"/></svg>
            <div class="track"><i></i></div>
            <svg width="11" height="11" viewBox="0 0 11 11"><path d="M0 5.5h11M5.5 0v11" stroke="#555"/></svg>
          </div>
          <div class="pct">110%</div>
          <div class="st-fit">${ic.fit}</div>
        </div>
      </div>

      <div class="wm" lang="ar" dir="rtl">نفذلي</div>
      <div class="wm2">nafezly.com</div>
    `;
  }
}
